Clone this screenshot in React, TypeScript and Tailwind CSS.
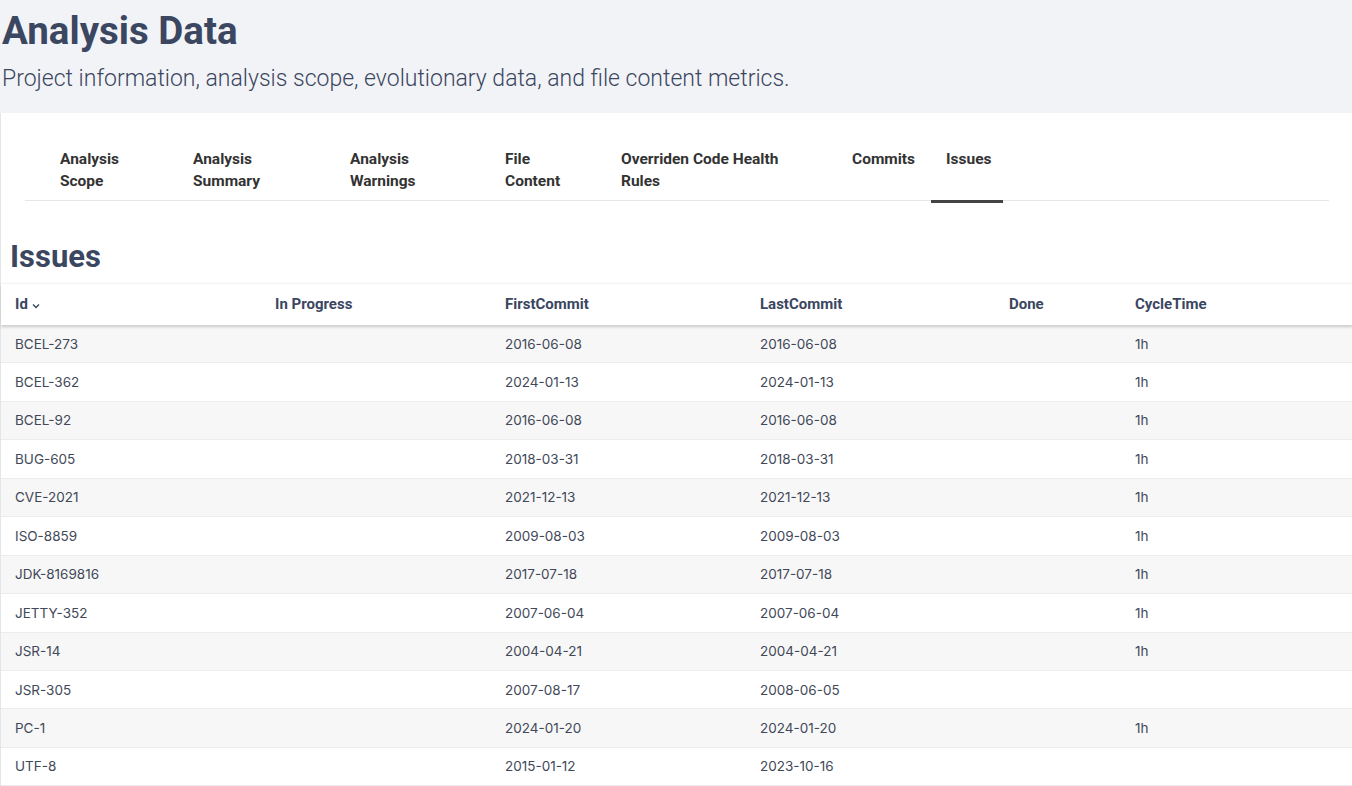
import React from "react";

const tabs: { lines: string[]; w: string; active?: boolean }[] = [
  { lines: ["Analysis", "Scope"], w: "w-[133px]" },
  { lines: ["Analysis", "Summary"], w: "w-[157px]" },
  { lines: ["Analysis", "Warnings"], w: "w-[155px]" },
  { lines: ["File", "Content"], w: "w-[116px]" },
  { lines: ["Overriden Code Health", "Rules"], w: "w-[231px]" },
  { lines: ["Commits"], w: "w-[94px]" },
  { lines: ["Issues"], w: "w-[72px]", active: true },
];

const rows = [
  ["BCEL-273", "", "2016-06-08", "2016-06-08", "", "1h"],
  ["BCEL-362", "", "2024-01-13", "2024-01-13", "", "1h"],
  ["BCEL-92", "", "2016-06-08", "2016-06-08", "", "1h"],
  ["BUG-605", "", "2018-03-31", "2018-03-31", "", "1h"],
  ["CVE-2021", "", "2021-12-13", "2021-12-13", "", "1h"],
  ["ISO-8859", "", "2009-08-03", "2009-08-03", "", "1h"],
  ["JDK-8169816", "", "2017-07-18", "2017-07-18", "", "1h"],
  ["JETTY-352", "", "2007-06-04", "2007-06-04", "", "1h"],
  ["JSR-14", "", "2004-04-21", "2004-04-21", "", "1h"],
  ["JSR-305", "", "2007-08-17", "2008-06-05", "", ""],
  ["PC-1", "", "2024-01-20", "2024-01-20", "", "1h"],
  ["UTF-8", "", "2015-01-12", "2023-10-16", "", ""],
];

const colW = ["w-[260px]", "w-[230px]", "w-[255px]", "w-[249px]", "w-[126px]", "flex-1"];
const heads = ["Id", "In Progress", "FirstCommit", "LastCommit", "Done", "CycleTime"];

export default function App() {
  return (
    <div className="min-h-screen bg-[#f2f3f7] font-['Roboto',sans-serif] overflow-hidden">
      <div className="h-[113px] pl-[2px] pt-[9px]">
        <h1 className="text-[38.5px] leading-[44px] font-bold text-[#3b4660]">Analysis Data</h1>
        <p className="mt-[12px] text-[23px] leading-[28px] font-light text-[#3b4660]">
          Project information, analysis scope, evolutionary data, and file content metrics.
        </p>
      </div>
      <div className="bg-white border-l border-[#e3e5ea] h-[673px]">
        <div className="pt-[35px] pl-[24px] pr-[23px]">
          <div className="flex border-b border-[#e6e6e6] pl-[20px]">
            {tabs.map((t) => (
              <div
                key={t.lines[0] + t.w}
                className={`${t.w} relative px-[15px] pb-[8px] text-[15.5px] leading-[22px] font-bold text-[#333]`}
              >
                {t.lines.map((l) => (
                  <div key={l} className="whitespace-nowrap">{l}</div>
                ))}
                {t.active && <span className="absolute left-0 right-0 bottom-[-3px] h-[3px] bg-[#444]" />}
              </div>
            ))}
          </div>
        </div>
        <h2 className="pl-[9px] mt-[36px] text-[31px] leading-[40px] font-bold text-[#3b4660]">Issues</h2>
        <div className="mt-[6px] w-[1352px]">
          <div className="flex h-[42px] items-center border-t border-[#f3f3f3] shadow-[0_2px_3px_rgba(0,0,0,0.18)] relative z-10 bg-white text-[15px] font-bold text-[#3b4660]">
            {heads.map((h, i) => (
              <div key={h} className={`${colW[i]} pl-[14px] flex items-center gap-[3px]`}>
                {h}
                {i === 0 && (
                  <svg width="10" height="10" viewBox="0 0 10 10" className="mt-[2px]">
                    <path d="M2 3.5 L5 6.5 L8 3.5" fill="none" stroke="#3b4660" strokeWidth="1.4" />
                  </svg>
                )}
              </div>
            ))}
          </div>
          {rows.map((r, ri) => (
            <div
              key={r[0]}
              className={`flex h-[38.45px] items-center border-b border-[#ececec] text-[13.5px] text-[#414858] font-['Inter',sans-serif] ${
                ri % 2 === 0 ? "bg-[#f7f7f7]" : "bg-white"
              }`}
            >
              {r.map((c, ci) => (
                <div key={ci} className={`${colW[ci]} pl-[14px]`}>
                  {c}
                </div>
              ))}
            </div>
          ))}
        </div>
      </div>
    </div>
  );
}
